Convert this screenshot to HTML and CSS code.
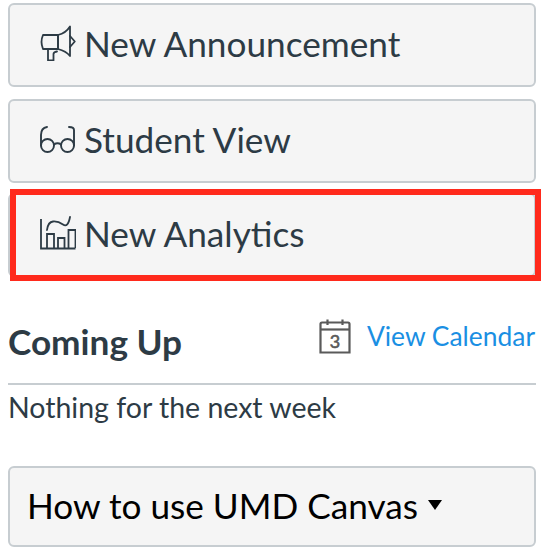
FILE: index.html
```html
<!DOCTYPE html>
<html lang="en">
<head>
<meta charset="utf-8">
<title>Course sidebar</title>
<link rel="stylesheet" href="styles.css">
</head>
<body>
<div class="sidebar">
  <a class="btn">
    <svg class="icon" viewBox="0 0 36 36" fill="none" stroke="#2d3b45" stroke-width="1.8" stroke-linejoin="round" stroke-linecap="round">
      <path d="M3 10H18V24H3Q1.500 20 1.500 17Q1.500 13.500 3 10Z"/>
      <path d="M18 10Q26 8 30 1.500V31Q26 26 18 24Z"/>
      <path d="M30 11L34.800 16.500L30 22"/>
      <path d="M8 24V35.500H13.500V29Q13.500 27 17 26.500"/>
    </svg>
    <span>New Announcement</span>
  </a>
  <a class="btn">
    <svg class="icon" viewBox="0 0 36 36" fill="none" stroke="#2d3b45" stroke-width="1.9" stroke-linecap="round">
      <circle cx="7.500" cy="24.500" r="6.500"/>
      <circle cx="27.500" cy="24.500" r="6.500"/>
      <path d="M14 23.500Q17.500 21 21 23.500"/>
      <path d="M1 24.500V14Q1 7 7 6"/>
      <path d="M34 24.500V9Q34 6 29 6"/>
    </svg>
    <span>Student View</span>
  </a>
  <div class="highlight-wrap">
    <a class="btn">
      <svg class="icon" viewBox="0 0 36 36" fill="none" stroke="#2d3b45" stroke-width="1.8">
        <path d="M1 4V33.500H35.500"/>
        <path d="M7 33V19H14V33M18 33V23H24.500V33M28.500 33V15H35.500V33"/>
        <path d="M7 15Q8 7 13 6.500T23 9.500T30 2" stroke-linecap="round"/>
      </svg>
      <span>New Analytics</span>
    </a>
    <div class="highlight"></div>
  </div>
  <div class="coming-header">
    <h2>Coming Up</h2>
    <div class="cal-link">
      <svg class="cal" viewBox="0 0 32 36" fill="none" stroke="#5a5a5a" stroke-width="2.2">
        <path d="M1.500 34.500V6Q1.500 4.500 3 4.500H29Q30.500 4.500 30.500 6V34.500Z"/>
        <path d="M1.500 11.500H30.500"/>
        <path d="M8.500 1.500V7M23.500 1.500V7"/>
        <text x="16" y="29.500" text-anchor="middle" class="cal-num">3</text>
      </svg>
      <span>View Calendar</span>
    </div>
  </div>
  <p class="nothing">Nothing for the next week</p>
  <div class="dropdown">
    <span>How to use UMD Canvas</span>
    <i class="caret"></i>
  </div>
</div>
</body>
</html>
```
FILE: styles.css
```css
html, body {
  margin: 0;
  padding: 0;
  background: #fff;
}
.sidebar {
  width: 528px;
  margin-left: 8px;
  padding-top: 3px;
  font-family: Lato, "Open Sans", sans-serif;
  color: #2d3b45;
}
.btn {
  box-sizing: border-box;
  height: 84px;
  display: flex;
  align-items: center;
  gap: 8px;
  padding: 0 0 4px 30px;
  margin-bottom: 12px;
  background: #f5f5f5;
  border: 2px solid #c7cdd1;
  border-radius: 6px;
  font-size: 35.2px;
}
.icon {
  width: 36px;
  height: 36px;
  flex: none;
}
.highlight-wrap {
  position: relative;
  height: 86px;
  margin-top: -2px;
}
.highlight-wrap .btn {
  margin: 0;
}
.highlight {
  position: absolute;
  left: 2px;
  top: -4px;
  right: -5px;
  bottom: -2px;
  border: 6px solid #ff2a1c;
}
.coming-header {
  display: flex;
  justify-content: space-between;
  align-items: flex-start;
  height: 106px;
  box-sizing: border-box;
  border-bottom: 2px solid #c7cdd1;
  padding-top: 39px;
}
.coming-header h2 {
  margin: 1px 0 0;
  font-size: 35.2px;
  font-weight: 700;
  line-height: 44px;
}
.cal-link {
  display: flex;
  align-items: center;
  gap: 16px;
  margin-right: 1px;
  font-size: 26.4px;
  color: #1a8fe3;
}
.cal {
  width: 32px;
  height: 36px;
}
.cal-num {
  font-family: Lato, sans-serif;
  font-size: 18px;
  fill: #5a5a5a;
  stroke: #5a5a5a;
  stroke-width: 0.6;
}
.nothing {
  margin: 4px 0 0;
  font-size: 28.5px;
  line-height: 36px;
}
.dropdown {
  box-sizing: border-box;
  margin-top: 41px;
  height: 81px;
  display: flex;
  align-items: center;
  gap: 10px;
  padding: 0 0 4px 17px;
  background: #f5f5f5;
  border: 2px solid #c7cdd1;
  border-radius: 6px;
  color: #000;
  font-size: 35.2px;
}
.caret {
  width: 0;
  height: 0;
  border-left: 7.5px solid transparent;
  border-right: 7.5px solid transparent;
  border-top: 10px solid #000;
}
```
